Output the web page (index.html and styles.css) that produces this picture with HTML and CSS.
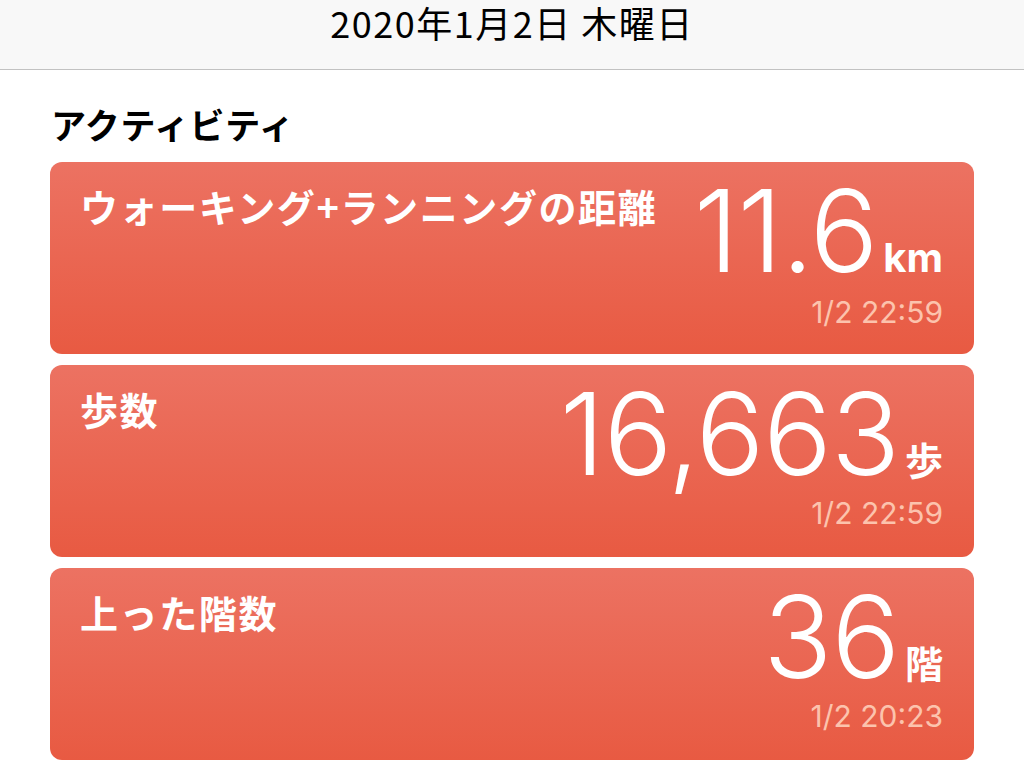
FILE: index.html
```html
<!DOCTYPE html>
<html lang="ja">
<head>
<meta charset="utf-8">
<link rel="stylesheet" href="styles.css">
</head>
<body>
<header class="topbar">
  <h1 class="date">2020年1月2日 木曜日</h1>
</header>
<main class="content">
  <h2 class="section-title">アクティビティ</h2>
  <div class="cards">
    <div class="card">
      <div class="label">ウォーキング+ランニングの距離</div>
      <div class="value">
        <div class="reading"><span class="num">11.6</span><span class="unit unit-latin">km</span></div>
        <div class="time">1/2 22:59</div>
      </div>
    </div>
    <div class="card">
      <div class="label">歩数</div>
      <div class="value">
        <div class="reading"><span class="num">16,663</span><span class="unit">歩</span></div>
        <div class="time">1/2 22:59</div>
      </div>
    </div>
    <div class="card">
      <div class="label">上った階数</div>
      <div class="value">
        <div class="reading"><span class="num">36</span><span class="unit">階</span></div>
        <div class="time">1/2 20:23</div>
      </div>
    </div>
  </div>
</main>
</body>
</html>
```

FILE: styles.css
```css
* { box-sizing: border-box; }

html, body {
  margin: 0;
  padding: 0;
  background: #ffffff;
}

body {
  width: 1024px;
  height: 780px;
  overflow: hidden;
  font-family: "Noto Sans CJK JP", "Noto Sans", sans-serif;
  color: #000;
}

.topbar {
  height: 70px;
  background: #f8f8f8;
  border-bottom: 1px solid #c2c2c2;
  display: flex;
  justify-content: center;
}

.date {
  margin: 0;
  font-size: 36px;
  line-height: 44px;
  font-weight: 400;
  letter-spacing: 1.5px;
}

.content {
  padding: 0 50px;
}

.section-title {
  margin: 0;
  padding: 34px 0 0 1px;
  height: 92px;
  font-size: 35px;
  line-height: 40px;
  font-weight: 700;
  letter-spacing: 0.6px;
}

.cards {
  display: flex;
  flex-direction: column;
  gap: 11px;
}

.card {
  height: 192px;
  border-radius: 12px;
  background: linear-gradient(to bottom, #ec7262, #e85a42);
  color: #fff;
  display: flex;
  justify-content: space-between;
  align-items: flex-start;
  padding: 0 31px 0 30px;
}

.label {
  padding-top: 22px;
  font-size: 38px;
  line-height: 44px;
  font-weight: 700;
  letter-spacing: 1.6px;
  white-space: nowrap;
}

.value {
  display: flex;
  flex-direction: column;
  align-items: flex-end;
  padding-top: 29px;
}

.reading {
  display: flex;
  align-items: baseline;
  gap: 6px;
  line-height: 80px;
}

.num {
  font-family: "Inter", "Liberation Sans", sans-serif;
  font-weight: 300;
  font-size: 114px;
  letter-spacing: -1px;
}

.unit {
  font-size: 38px;
  font-weight: 700;
}

.unit-latin {
  font-family: "Inter", "Liberation Sans", sans-serif;
  font-size: 40px;
}

.time {
  margin-top: 2px;
  font-family: "Inter", "Liberation Sans", sans-serif;
  font-size: 30px;
  line-height: 24px;
  color: #fcc3ad;
}
```
